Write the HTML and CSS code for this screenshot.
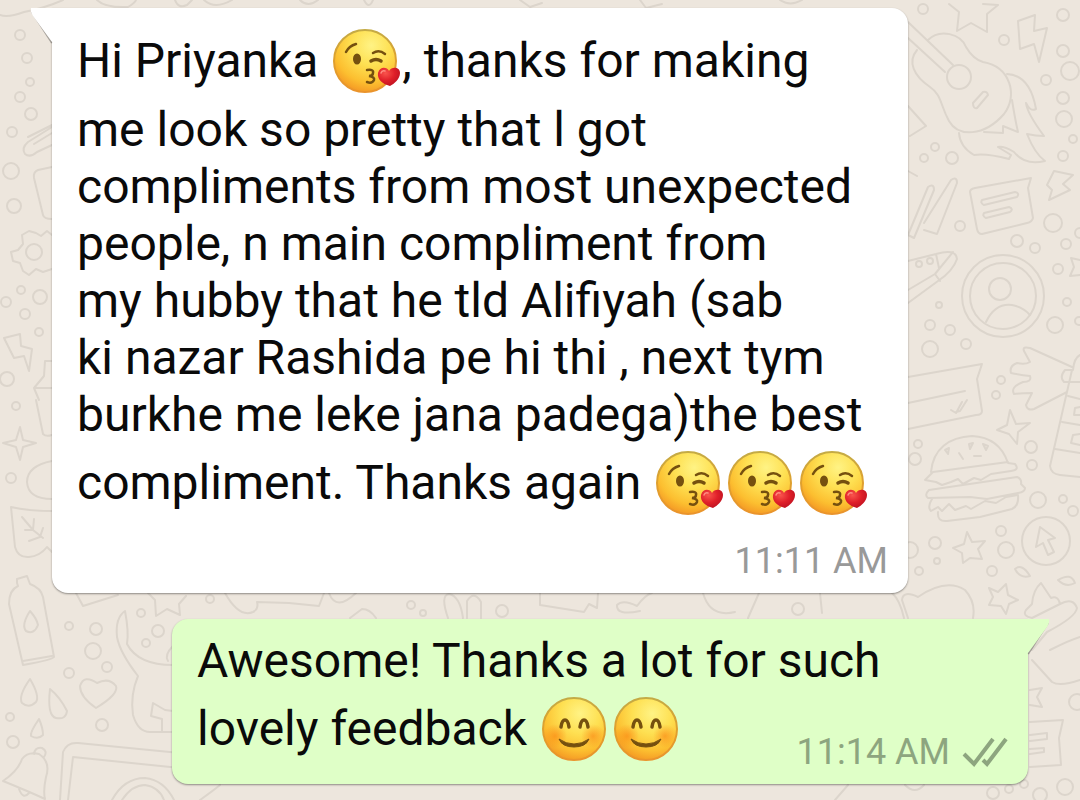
FILE: index.html
```
<!DOCTYPE html>
<html lang="en">
<head>
    <meta charset="UTF-8">
    <meta name="viewport" content="width=device-width, initial-scale=1.0">
    <title>Chat</title>
    <link rel="stylesheet" href="styles.css">
</head>
<body>
    <!-- Shared emoji and icons -->
    <svg class="defs" aria-hidden="true">
        <defs>
            <radialGradient id="face" cx="0.6" cy="0.25" r="0.8">
                <stop offset="0" stop-color="#fff385"/>
                <stop offset="0.4" stop-color="#fee052"/>
                <stop offset="0.75" stop-color="#fcbf30"/>
                <stop offset="1" stop-color="#f39322"/>
            </radialGradient>
            <linearGradient id="rim" x1="0" y1="0" x2="0" y2="1">
                <stop offset="0" stop-color="#c4ab45"/>
                <stop offset="0.5" stop-color="#dfa02e"/>
                <stop offset="1" stop-color="#ea942c"/>
            </linearGradient>
            <radialGradient id="blush">
                <stop offset="0" stop-color="#fa8010" stop-opacity="0.6"/>
                <stop offset="1" stop-color="#fa8010" stop-opacity="0"/>
            </radialGradient>
            <radialGradient id="red" cx="0.35" cy="0.3" r="0.8">
                <stop offset="0" stop-color="#f9544c"/>
                <stop offset="0.5" stop-color="#e02029"/>
                <stop offset="1" stop-color="#b80f20"/>
            </radialGradient>
            <symbol id="kiss" viewBox="0 0 72 72">
                <circle cx="35" cy="36" r="31" fill="url(#face)" stroke="url(#rim)" stroke-width="2"/>
                <g fill="none" stroke="#75500f" stroke-width="3" stroke-linecap="round">
                    <path d="M16 27Q19 21 26 19" stroke-width="2.5"/>
                    <path d="M43 28Q49 24 55 29" stroke-width="2.5"/>
                    <path d="M41 36Q46 33 51 36" stroke-width="3.5"/>
                    <path d="M37 45Q44 44 43 48Q43 51 39 51Q45 52 44 55Q42 59 37 57" stroke-width="2.5"/>
                </g>
                <ellipse cx="27" cy="34" rx="4" ry="5.5" fill="#75500f"/>
                <path d="M60 61C52 59 47 54 48 48C50 41 57 42 59 46C62 41 70 42 70 48C70 54 64 59 60 61Z" fill="url(#red)"/>
                <path d="M51 48Q52 45 55 46" fill="none" stroke="#ff8d80" stroke-width="1.5" stroke-linecap="round"/>
            </symbol>
            <symbol id="smile" viewBox="0 0 72 72">
                <circle cx="35" cy="36" r="31" fill="url(#face)" stroke="url(#rim)" stroke-width="2"/>
                <circle cx="16" cy="43" r="12" fill="url(#blush)"/>
                <circle cx="54" cy="43" r="12" fill="url(#blush)"/>
                <g fill="none" stroke="#75500f" stroke-width="3.5" stroke-linecap="round">
                    <path d="M22 34Q23 27 26 27Q29 27 30 34"/>
                    <path d="M41 34Q42 27 45 27Q48 27 49 34"/>
                </g>
                <path d="M20 46Q23 54 35 54Q47 54 50 46Q43 51 35 51Q27 51 20 46Z" fill="#75500f" stroke="#75500f" stroke-linejoin="round"/>
            </symbol>
        </defs>
    </svg>

    <main class="chat">
        <svg class="wallpaper" viewBox="0 0 1080 800" preserveAspectRatio="xMinYMin slice" aria-hidden="true">
            <!-- top edge -->
            <path d="M0 15Q8 18 24 12Q45 8 63 0M97 0Q105 8 128 7Q135 3 136 0M175 0Q178 9 187 5L192 0M204 0Q215 10 232 0M300 0Q308 8 318 0M364 0Q369 10 373 0M520 0L530 7L542 3M640 0L646 8L662 4M780 0Q790 7 802 0"/>
            <!-- left side -->
            <path d="M52 127L28 142Q21 148 25 154Q30 158 37 152L52 145M28 137L52 125M52 133L34 144M52 167L38 170Q33 172 34 178L43 215Q44 219 52 219"/>
            <path d="M52 235L47 231L41 236L36 233L29 231L22 235L23 244L18 250L11 252L13 261L20 263L23 271L29 275L36 269L43 272L52 269"/>
            <circle cx="34" cy="252" r="8"/>
            <path d="M4 338L20 334L21 346L32 349L29 371L24 356L14 358ZM52 361L45 361L44 376L34 388L39 400M34 388H52M36 400L43 434Q46 437 52 435"/>
            <path d="M20 427L23 440L36 443L23 447L20 460L16 447L3 443L16 440ZM52 461Q27 466 27 482Q28 499 52 499"/>
            <path d="M52 511Q28 511 11 507L15 547Q18 558 29 557Q40 556 47 547L52 552M22 517L33 530L43 538M25 530L33 530L34 519M29 541L40 537L43 528"/>
            <path d="M17 583L17 579L27 576L30 584Q41 588 43 597L54 657Q52 660 23 665L9 604Q9 590 18 586ZM23 661L52 656M30 611Q21 625 26 631Q34 635 38 625Q37 619 30 611Z"/>
            <path d="M30 679Q18 696 22 703Q29 709 36 702Q40 696 30 679ZM50 689Q60 697 67 711Q66 720 56 718Q47 716 50 689ZM39 719Q30 732 31 736Q38 740 43 735Q43 728 39 719Z"/>
            <path d="M96 708Q80 697 80 686Q84 674 97 683Q109 677 116 686Q119 694 96 708Z"/>
            <path d="M3 781Q18 771 22 759Q28 751 39 754Q51 762 46 777Q43 791 45 799Q30 792 3 781ZM19 789Q23 800 29 793M34 754Q35 747 42 748Q48 751 44 757"/>
            <path d="M60 800L63 752Q67 742 78 743L180 753M68 800L73 757L180 768M112 800Q124 778 145 778Q164 780 174 800M122 800Q132 785 145 785Q159 787 164 800"/>
            <path d="M125 611Q115 618 117 637Q120 653 138 676Q130 695 133 715Q138 732 150 732H173M125 611Q129 632 127 644Q138 665 173 665M173 711L165 710L153 703L151 716L162 719L162 731M173 646Q164 655 168 661"/>
            <!-- between the bubbles -->
            <path d="M76 593L83 606L118 595M148 593L155 600L156 616L167 609L180 615L179 604L186 596M225 593Q239 618 253 612Q259 609 257 602L289 603L319 606L324 593M329 593Q336 612 356 593M350 618L362 609Q370 609 376 618M448 618Q440 595 449 594Q460 596 463 618M467 618V601Q474 590 481 602V618M540 593V605L584 612L589 604L597 608L598 593M640 611Q616 616 617 605Q623 599 637 606Q645 595 652 593M703 593Q710 618 735 612M748 618L759 593M820 593L822 613M892 593Q900 600 904 618"/>
            <!-- guitar -->
            <path d="M908 22L953 65M908 38L945 72M928 40C940 28 961 34 966 47Q973 59 983 62C1011 67 1018 96 1004 114C984 137 958 137 949 121C940 105 942 95 930 87C914 76 907 62 917 50"/>
            <circle cx="959" cy="77" r="12"/>
            <path d="M973 103L983 92Q987 91 988 95L977 108Q973 109 973 103ZM1007 74Q1030 75 1036 109Q1030 112 1026 103Q1027 113 1044 136Q1036 136 1027 134Q1035 154 1045 161Q1025 166 1014 152Q1004 146 998 147L1011 155L1009 159Q986 153 974 155Q960 147 959 133M1012 100Q1015 119 1018 132L1003 126V133L984 132"/>
            <!-- stars and bolts -->
            <path d="M949 4L959 12L957 31L971 23L987 32L987 14L998 5L983 4M1018 21L1035 15L1034 31L1047 28L1039 62L1034 44L1020 49ZM1054 171L1073 175L1063 184L1070 190L1049 200L1052 190L1047 185Z"/>
            <path d="M908 106L926 126L910 136M908 171L917 176M908 235L928 187Q934 183 934 190L914 238ZM924 223L951 180Q957 176 957 183L937 234L924 230M970 192Q970 189 975 188L1031 178L1028 188L1033 218Q1032 222 1027 223L982 234Q978 234 977 229Z"/>
            <path d="M982 200L1015 192Q1020 193 1017 197L984 205Q980 203 982 200ZM984 213L1009 207Q1014 209 1010 212L986 218Q982 216 984 213Z"/>
            <!-- rocket -->
            <path d="M908 261L936 254Q956 248 957 259Q953 271 938 281L908 303M908 290L935 274L953 252M936 254L939 268M935 274L940 281"/>
            <circle cx="1003" cy="296" r="41"/><circle cx="1003" cy="296" r="33"/><circle cx="1000" cy="289" r="11"/>
            <path d="M986 322Q995 303 1012 305Q1023 307 1030 315M1080 260L1071 258L1074 267L1070 276L1080 275"/>
            <path d="M908 377L982 364L977 379L982 411Q982 415 976 415L908 429M908 403L965 391M951 410L956 413L962 402M956 412L960 411L967 400"/>
            <path d="M1072 367L1030 348Q1022 346 1024 351L1030 362Q1025 365 1017 363Q1009 366 1011 373Q1021 375 1030 376Q1032 382 1023 382Q1010 387 1014 394Q1022 393 1032 393L1026 405Q1027 411 1034 409L1067 392M1080 355Q1074 358 1073 370H1065Q1059 377 1064 382H1080M1072 370L1050 466Q1051 474 1060 475L1080 477M1068 396L1080 399M1062 422L1080 425M1055 449L1080 453M1080 407L1075 408L1074 415H1080M1080 434L1073 435L1071 443L1080 445"/>
            <path d="M1010 410L1016 424L1030 423L1018 432L1017 444L1009 434L997 430L1007 425Z"/>
            <!-- burger -->
            <path d="M931 472C933 449 949 437 972 436C993 437 1003 448 1008 463L1015 464Q1020 470 1011 471L991 474L981 480L974 478L963 484L958 479L951 482L942 485L936 482L925 480L933 472L1008 462M929 490L1017 477Q1022 479 1021 484L1025 488Q1025 492 1018 493L987 499L970 497L928 498Q924 495 929 490M932 499Q927 507 931 511L938 507L942 511L949 504L955 510L966 506L971 509L985 501L996 503L1006 497L1018 495Q1019 506 1012 509L980 517L947 521Q937 522 938 512"/>
            <path d="M945 450L949 448L948 454ZM969 444L973 443L970 449ZM983 444L988 446L986 450ZM959 453L963 459M974 456L981 456"/>
            <path d="M967 532L972 542L985 541L978 549L982 559L970 558L963 563L962 553L953 548L964 544ZM1006 584L1008 595L1018 600L1009 604L1006 614L1001 606L989 605L993 597L989 588L998 592Z"/>
            <circle cx="1046" cy="541" r="24"/>
            <path d="M1040 527L1055 538L1048 540L1054 552L1048 555L1043 543L1036 547ZM1015 569Q1022 563 1030 576Q1020 579 1015 569ZM1058 580Q1071 572 1075 583Q1066 588 1058 580Z"/>
            <path d="M908 618L902 600Q903 590 918 597Q946 578 965 590Q976 602 973 618M1032 604Q1033 590 1041 583L1051 598Q1058 595 1060 604L1032 618Q1022 616 1026 610ZM1060 604Q1073 597 1077 608Q1076 617 1047 632L1032 650M1050 650Q1070 640 1080 637M1032 660L1052 682Q1060 687 1080 680M1030 690L1042 688L1037 697L1042 707L1030 705M1030 722L1063 720L1059 738L1061 765L1030 767M1030 735L1047 733V739L1030 741M1030 749L1044 748V752L1030 754"/>
            <path d="M200 800Q214 790 220 785M835 800L848 785M905 785Q915 795 924 785"/>
            <g>
                <circle cx="20" cy="35" r="5"/><circle cx="27" cy="58" r="5"/><circle cx="30" cy="82" r="4"/><circle cx="20" cy="97" r="5"/><circle cx="31" cy="114" r="6"/><circle cx="12" cy="132" r="5"/>
                <circle cx="11" cy="171" r="8"/><circle cx="14" cy="206" r="7"/><circle cx="21" cy="290" r="4"/><circle cx="6" cy="302" r="5"/><circle cx="40" cy="297" r="7"/><circle cx="25" cy="314" r="5"/><circle cx="39" cy="332" r="4"/><circle cx="7" cy="379" r="7"/><circle cx="16" cy="406" r="4"/><circle cx="11" cy="478" r="5"/>
                <circle cx="69" cy="626" r="4"/><circle cx="96" cy="629" r="6"/><circle cx="93" cy="651" r="8"/><circle cx="107" cy="667" r="5"/><circle cx="69" cy="673" r="5"/><circle cx="102" cy="725" r="6"/><circle cx="10" cy="717" r="4"/><circle cx="13" cy="742" r="6"/><circle cx="141" cy="613" r="4"/><circle cx="158" cy="631" r="6"/><circle cx="146" cy="643" r="4"/>
                <circle cx="210" cy="599" r="4"/><circle cx="411" cy="605" r="4"/><circle cx="423" cy="613" r="3"/><circle cx="502" cy="611" r="6"/><circle cx="798" cy="609" r="6"/>
                <circle cx="923" cy="9" r="5"/><circle cx="1063" cy="15" r="6"/><circle cx="1004" cy="40" r="5"/><circle cx="1063" cy="51" r="6"/><circle cx="1070" cy="71" r="9"/><circle cx="1046" cy="80" r="5"/><circle cx="1063" cy="98" r="6"/><circle cx="1064" cy="119" r="8"/><circle cx="1073" cy="139" r="4"/><circle cx="1063" cy="156" r="5"/>
                <circle cx="935" cy="147" r="4"/><circle cx="924" cy="158" r="4"/><circle cx="952" cy="158" r="6"/><circle cx="960" cy="226" r="5"/><circle cx="1053" cy="223" r="9"/><circle cx="1017" cy="241" r="6"/><circle cx="1035" cy="248" r="5"/><circle cx="1066" cy="244" r="5"/><circle cx="1080" cy="233" r="5"/><circle cx="1058" cy="269" r="5"/><circle cx="919" cy="264" r="3"/><circle cx="930" cy="261" r="3"/>
                <circle cx="939" cy="305" r="3"/><circle cx="930" cy="325" r="5"/><circle cx="950" cy="330" r="5"/><circle cx="930" cy="349" r="8"/><circle cx="966" cy="344" r="5"/><circle cx="1067" cy="302" r="4"/><circle cx="1055" cy="325" r="8"/><circle cx="1079" cy="321" r="4"/><circle cx="1001" cy="380" r="4"/><circle cx="996" cy="395" r="4"/>
                <circle cx="918" cy="444" r="4"/><circle cx="915" cy="459" r="6"/><circle cx="1031" cy="447" r="6"/><circle cx="1032" cy="465" r="5"/><circle cx="1038" cy="500" r="8"/><circle cx="1063" cy="499" r="4"/><circle cx="1073" cy="511" r="5"/><circle cx="935" cy="543" r="6"/><circle cx="910" cy="550" r="8"/><circle cx="937" cy="561" r="3"/><circle cx="919" cy="571" r="4"/><circle cx="1001" cy="531" r="5"/><circle cx="1006" cy="550" r="8"/><circle cx="992" cy="571" r="5"/>
                <circle cx="1077" cy="702" r="8"/><circle cx="1065" cy="787" r="8"/><circle cx="1040" cy="795" r="7"/><circle cx="1024" cy="784" r="4"/><circle cx="1009" cy="789" r="4"/><circle cx="993" cy="793" r="6"/>
            </g>
        </svg>

        <article class="message received">
            <svg class="tail" viewBox="0 0 22 36" aria-hidden="true">
                <path class="shade" d="M1 4L21 35"/>
                <path class="fill" d="M0 0H22V36L21 34L2 8Q-1 3 0 0Z"/>
            </svg>
            <p class="text">
                Hi Priyanka <svg class="emoji" role="img" aria-label="Kiss"><use href="#kiss"/></svg>, thanks for making<br>
                me look so pretty that l got<br>
                compliments from most unexpected<br>
                people, n main compliment from<br>
                my hubby that he tld Alifiyah (sab<br>
                ki nazar Rashida pe hi thi , next tym<br>
                burkhe me leke jana padega)the best<br>
                compliment. Thanks again <svg class="emoji" role="img" aria-label="Kiss"><use href="#kiss"/></svg><svg class="emoji" role="img" aria-label="Kiss"><use href="#kiss"/></svg><svg class="emoji" role="img" aria-label="Kiss"><use href="#kiss"/></svg>
            </p>
            <div class="meta"><time>11:11 AM</time></div>
        </article>

        <article class="message sent">
            <svg class="tail" viewBox="0 0 22 36" aria-hidden="true">
                <path class="shade" d="M21 4L1 35"/>
                <path class="fill" d="M22 0H0V36L1 34L20 8Q23 3 22 0Z"/>
            </svg>
            <p class="text">
                Awesome! Thanks a lot for such<br>
                lovely feedback <svg class="emoji" role="img" aria-label="Smile"><use href="#smile"/></svg><svg class="emoji" role="img" aria-label="Smile"><use href="#smile"/></svg>
            </p>
            <div class="meta">
                <time>11:14 AM</time>
                <svg class="ticks" viewBox="0 0 46 32" role="img" aria-label="Delivered">
                    <path d="M2 18L12 28L31 3M21 24L25 28L44 3"/>
                </svg>
            </div>
        </article>
    </main>
</body>
</html>
```
FILE: styles.css
```
* {
    box-sizing: border-box;
}
body {
    margin: 0;
    font-family: Roboto, "Liberation Sans", sans-serif;
    background-color: #ede6dd;
    color: #0a0a0a;
}
.defs {
    position: absolute;
    width: 0;
    height: 0;
}
.chat {
    position: relative;
    display: flex;
    flex-direction: column;
    gap: 26px;
    min-height: 100vh;
    padding: 8px 52px 15px;
    overflow: hidden;
}
.wallpaper {
    position: absolute;
    top: 0;
    left: 0;
    width: 100%;
    height: 100%;
    fill: none;
    stroke: #dcd5cc;
    stroke-width: 2;
    stroke-linejoin: round;
    stroke-linecap: round;
}
.message {
    position: relative;
    padding: 13px 20px 11px 25px;
    border-radius: 16px;
    box-shadow: 0 1px 2px rgba(0, 0, 0, 0.4);
}
.received {
    margin-right: 120px;
    background-color: #fff;
    border-top-left-radius: 0;
}
.sent {
    margin-left: 120px;
    background-color: #dfffc7;
    border-top-right-radius: 0;
}
.text {
    margin: 0;
    font-size: 48px;
    line-height: 57px;
    white-space: nowrap;
}
.emoji {
    width: 72px;
    height: 72px;
    margin: 4px 0;
    vertical-align: -24px;
}
.meta {
    display: flex;
    justify-content: flex-end;
    align-items: center;
    gap: 12px;
    font-size: 36px;
    line-height: 42px;
    color: #999;
}
.received .meta {
    margin-top: 17px;
}
.sent .meta {
    margin-top: -38px;
    color: #8da57f;
}
.ticks {
    width: 46px;
    height: 32px;
    fill: none;
    stroke: #8da57f;
    stroke-width: 4;
}
.tail {
    position: absolute;
    top: 0;
    width: 22px;
    height: 36px;
    overflow: visible;
}
.received .tail {
    left: -21px;
}
.sent .tail {
    right: -21px;
}
.tail .shade {
    stroke: rgba(0, 0, 0, 0.3);
    stroke-width: 2;
}
.received .tail .fill {
    fill: #fff;
}
.sent .tail .fill {
    fill: #dfffc7;
}
```
